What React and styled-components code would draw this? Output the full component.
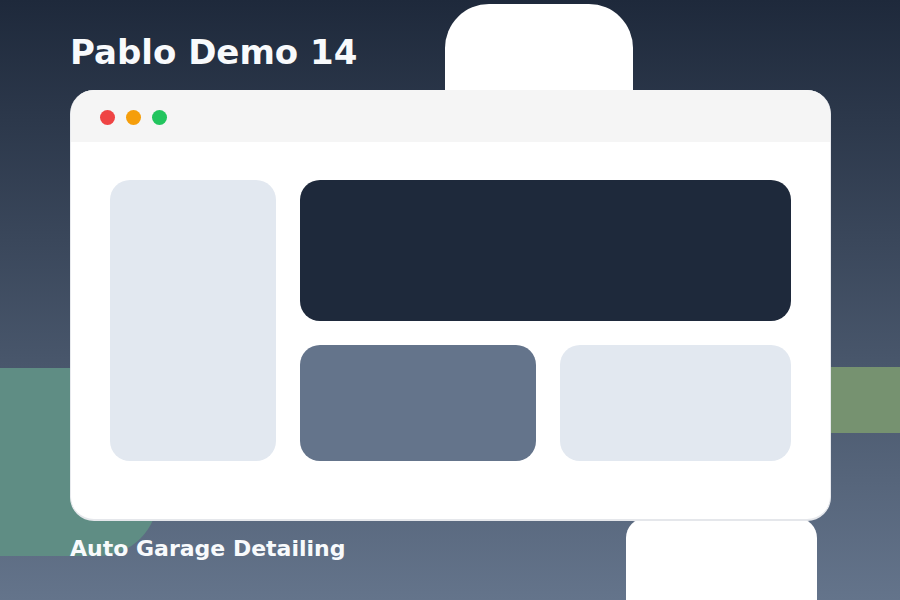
import React from "react";
import styled, { createGlobalStyle } from "styled-components";

const GlobalStyle = createGlobalStyle`
html, body {
  margin: 0;
  padding: 0;
}
body {
  font-family: "DejaVu Sans", sans-serif;
}
`;

const Page = styled.div`
position: relative;
width: 900px;
height: 600px;
overflow: hidden;
box-sizing: border-box;
padding: 0 69px 0 70px;
display: flex;
flex-direction: column;
background: linear-gradient(180deg, #1e293b 0%, #64748b 100%);
`;

const Shape = styled.div`
position: absolute;
left: ${(p) => p.$left}px;
top: ${(p) => p.$top}px;
width: ${(p) => p.$width}px;
height: ${(p) => p.$height}px;
border-radius: ${(p) => p.$radius};
background: ${(p) => p.$color};
`;

const Title = styled.h1`
position: relative;
margin: 0;
height: 90px;
box-sizing: border-box;
padding-top: 32px;
font-size: 34px;
line-height: 40px;
font-weight: 700;
color: #f8fafc;
`;

const Window = styled.div`
position: relative;
height: 431px;
display: flex;
flex-direction: column;
box-sizing: border-box;
border-radius: 24px;
overflow: hidden;
background: #ffffff;
border-left: 1px solid #e8eaee;
border-right: 1px solid #e8eaee;
border-bottom: 2px solid #e5e7eb;
`;

const TitleBar = styled.div`
height: 52px;
flex-shrink: 0;
display: flex;
align-items: center;
gap: 11px;
padding: 2px 0 0 29px;
box-sizing: border-box;
background: #f5f5f5;
`;

const Dot = styled.span`
width: 15px;
height: 15px;
border-radius: 50%;
background: ${(p) => p.$color};
`;

const Content = styled.div`
display: grid;
grid-template-columns: 166px 236px 231px;
grid-template-rows: 141px 116px;
gap: 24px;
padding: 38px 39px 0 39px;
`;

const Panel = styled.div`
border-radius: 20px;
background: ${(p) => p.$color};
`;

const SidePanel = styled(Panel)`
grid-row: 1 / 3;
`;

const HeroPanel = styled(Panel)`
grid-column: 2 / 4;
`;

const Subtitle = styled.p`
position: relative;
margin: 15px 0 0;
font-size: 22px;
line-height: 26px;
font-weight: 700;
color: #f8fafc;
`;

export default function App() {
  return (
    <Page>
      <GlobalStyle />
      <Shape $left={0} $top={368} $width={158} $height={188} $radius="0 0 60px 0" $color="#5f8d84" />
      <Shape $left={800} $top={367} $width={100} $height={66} $radius="0" $color="#769270" />
      <Shape $left={445} $top={4} $width={188} $height={120} $radius="44px 44px 0 0" $color="#ffffff" />
      <Shape $left={626} $top={518} $width={191} $height={82} $radius="20px 20px 0 0" $color="#ffffff" />
      <Title>Pablo Demo 14</Title>
      <Window>
        <TitleBar>
          <Dot $color="#ef4444" />
          <Dot $color="#f59e0b" />
          <Dot $color="#22c55e" />
        </TitleBar>
        <Content>
          <SidePanel $color="#e2e8f0" />
          <HeroPanel $color="#1e293b" />
          <Panel $color="#64748b" />
          <Panel $color="#e2e8f0" />
        </Content>
      </Window>
      <Subtitle>Auto Garage Detailing</Subtitle>
    </Page>
  );
}
